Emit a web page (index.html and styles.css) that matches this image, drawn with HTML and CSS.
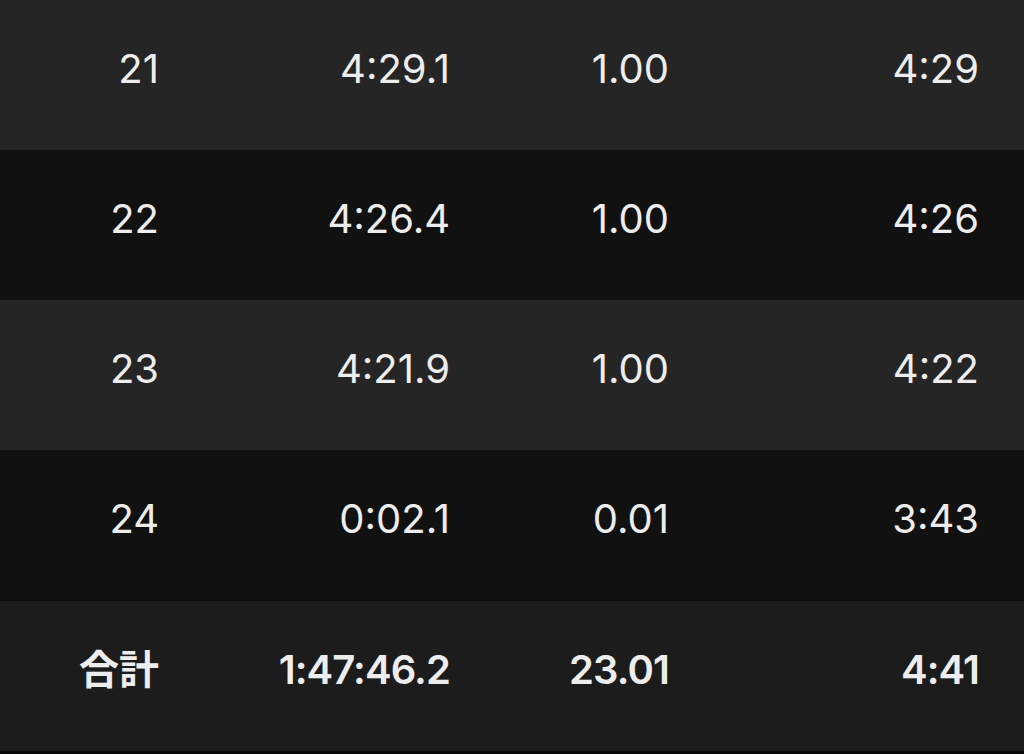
FILE: index.html
```html
<!DOCTYPE html>
<html lang="ja">
<head>
<meta charset="utf-8">
<link rel="stylesheet" href="styles.css">
</head>
<body>
<div class="table">
  <div class="row odd">
    <span class="c1">21</span><span class="c2">4:29.1</span><span class="c3">1.00</span><span class="c4">4:29</span>
  </div>
  <div class="row even">
    <span class="c1">22</span><span class="c2">4:26.4</span><span class="c3">1.00</span><span class="c4">4:26</span>
  </div>
  <div class="row odd">
    <span class="c1">23</span><span class="c2">4:21.9</span><span class="c3">1.00</span><span class="c4">4:22</span>
  </div>
  <div class="row even">
    <span class="c1">24</span><span class="c2">0:02.1</span><span class="c3">0.01</span><span class="c4">3:43</span>
  </div>
  <div class="row total">
    <span class="c1">合計</span><span class="c2">1:47:46.2</span><span class="c3">23.01</span><span class="c4">4:41</span>
  </div>
</div>
</body>
</html>
```
FILE: styles.css
```css
html, body {
  margin: 0;
  padding: 0;
  background: #080808;
}
body {
  width: 1024px;
  height: 754px;
  overflow: hidden;
  font-family: Inter, "Noto Sans CJK JP", sans-serif;
  color: #ededed;
}
.table {
  display: flex;
  flex-direction: column;
}
.row {
  display: grid;
  grid-template-columns: 159px 291px 219px 310px;
  height: 150px;
  align-items: center;
  font-size: 40px;
  box-sizing: border-box;
  padding-bottom: 12px;
}
.row span {
  text-align: right;
  line-height: 1;
}
.odd { background: #252525; }
.even { background: #111111; }
.total {
  background: #1c1c1c;
  font-weight: 600;
  margin-top: 1px;
  letter-spacing: -0.9px;
}
.total .c1 { letter-spacing: 0; }
```
